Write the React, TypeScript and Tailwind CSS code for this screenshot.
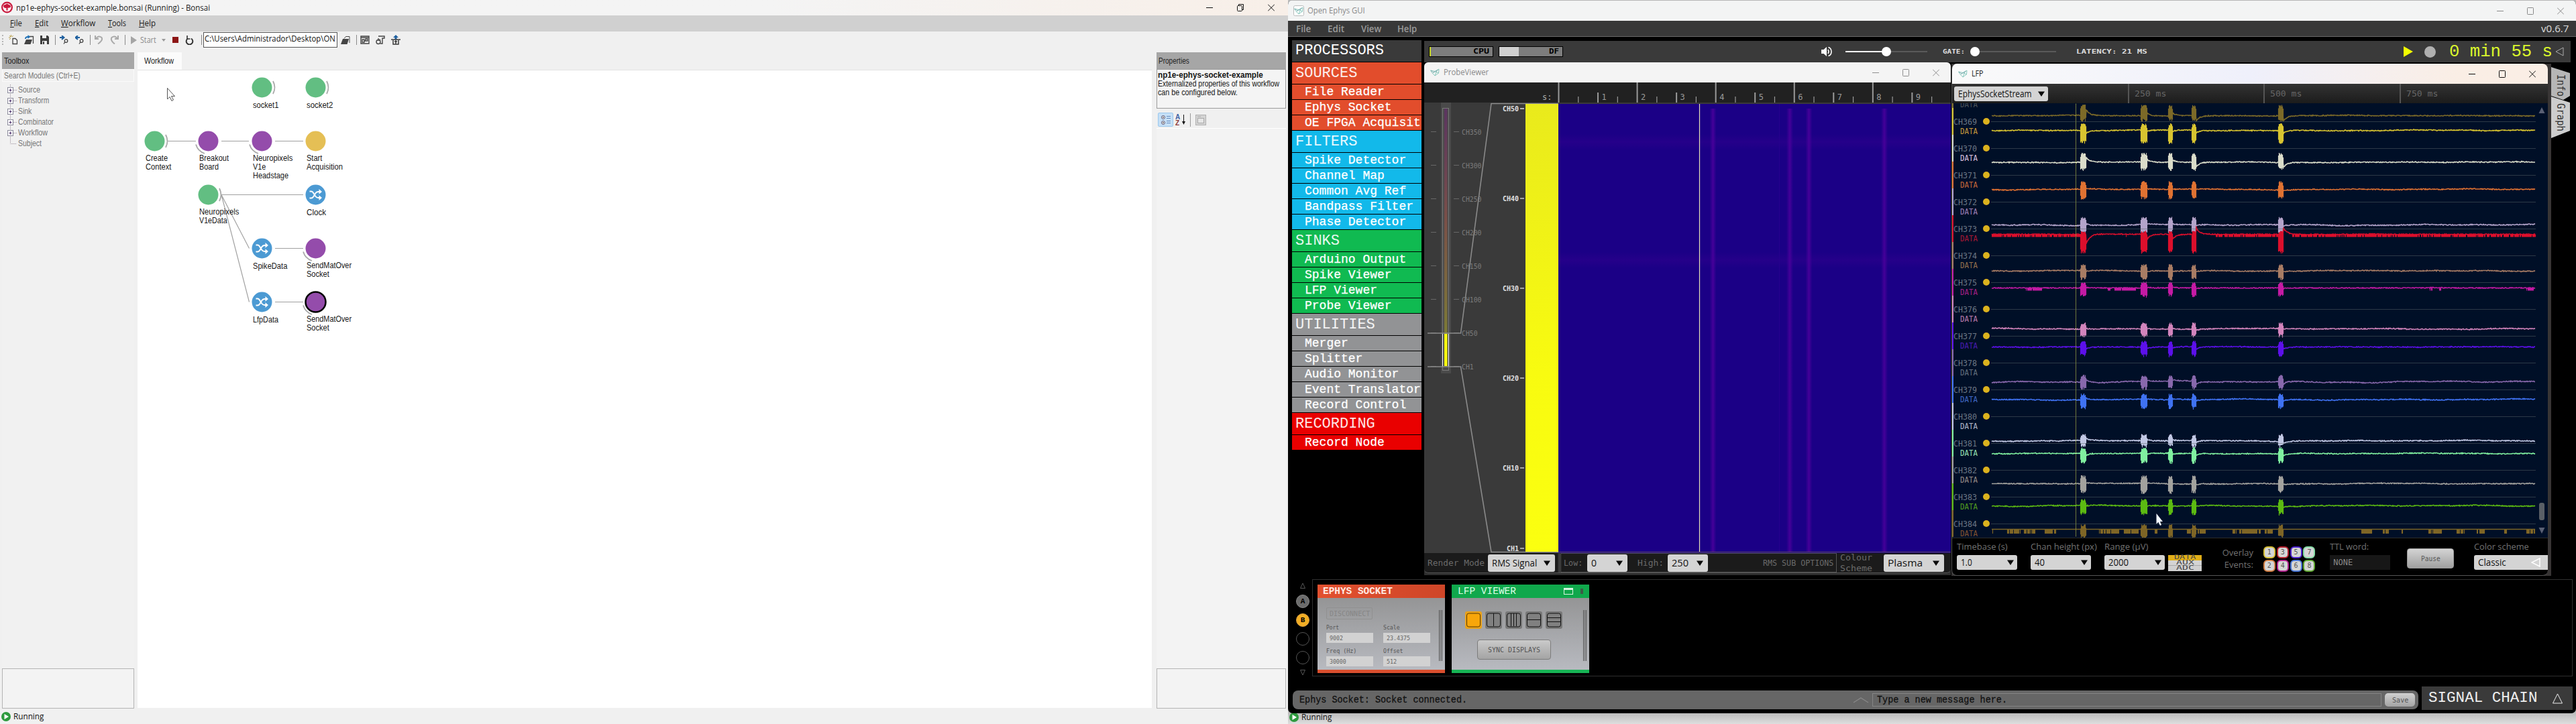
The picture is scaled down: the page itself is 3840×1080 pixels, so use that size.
import { useLayoutEffect, useRef, useState, type ReactNode } from "react";

/* Single line of text squeezed or stretched to a given width. */
function Fit({ w, className = "", children }: { w: number; className?: string; children: ReactNode }) {
  const ref = useRef<HTMLSpanElement>(null);
  const [scale, setScale] = useState(1);
  useLayoutEffect(() => {
    if (ref.current && ref.current.offsetWidth) setScale(w / ref.current.offsetWidth);
  }, [w]);
  return (
    <span className={"block shrink-0 leading-none " + className} style={{ width: w }}>
      <span ref={ref} className="inline-block origin-left whitespace-pre" style={{ transform: `scaleX(${scale})` }}>
        {children}
      </span>
    </span>
  );
}

const UI = "font-['Open_Sans','Noto_Sans',sans-serif]";
const ARIAL = "font-['Liberation_Sans',Arial,sans-serif]";
const MONO = "font-['Liberation_Mono',monospace]";
const CODE = "font-['DejaVu_Sans_Mono',monospace]";

function WinButtons({ color, className, restore }: { color: string; className: string; restore?: boolean }) {
  return (
    <div className={"flex items-center " + className}>
      <svg width="10" height="11" stroke={color} fill="none"><path d="M0 5.5H10" /></svg>
      <svg width="10" height="11" stroke={color} fill="none">
        {restore ? <><rect x=".5" y="2.5" width="7" height="8" rx="1" /><path d="M2.5 2V.5H9.5V8.5H8" /></> : <rect x=".5" y=".5" width="9" height="10" rx=".8" />}
      </svg>
      <svg width="10" height="11" stroke={color} fill="none"><path d="M0 .5L10 10.5M10 .5L0 10.5" /></svg>
    </div>
  );
}

function EphysLogo({ framed }: { framed?: boolean }) {
  return (
    <svg width="16" height="16" viewBox="0 0 16 16" fill="none">
      {framed && <rect x=".5" y=".5" width="15" height="15" rx="2" fill="#fff" stroke="#b9bcbc" />}
      <path d="M1.500 5L8 6.500L14 3L13.500 9L8 13L4.500 9.500L1.500 5ZM4.500 9.500L8 6.500L13.500 9M8 13L11 5" stroke="#7fc4b8" strokeWidth=".9" />
      <path d="M2 5L6 8L13 4" stroke="#6f9aa5" strokeWidth=".7" />
    </svg>
  );
}

function Caret({ className = "" }: { className?: string }) {
  return <svg width="10" height="8" className={"shrink-0 " + className}><path d="M0 .5H10L5 8Z" fill="#0a0a0a" /></svg>;
}

function Combo({ text, w, className }: { text: string; w: number; className: string }) {
  return (
    <div className={"flex shrink-0 items-center justify-between rounded-[3px] bg-[#d4d4d4] text-[#111] " + className}>
      <Fit w={w} className={UI + " text-[14px]"}>{text}</Fit>
      <Caret />
    </div>
  );
}

/* ---------------------------------------------------------------- Bonsai */

const Sep = () => <div className="h-[15px] w-px bg-[#8a8a8a]" />;

const toolbarItems: { w: string; el: ReactNode }[] = [
  { w: "w-[8px]", el: <div className="h-[15px] border-l-2 border-dotted border-[#b5b5b5]" /> },
  { w: "w-[24px]", el: <svg width="14" height="15" fill="none"><path d="M6 5.500H10L12.500 8V13.500H6Z" stroke="#444" strokeWidth="1.300" /><path d="M3.500 0V3M0 4H2.500M1 1L3 3M6.500 1L5 3M1 7L3 5" stroke="#b59a3e" /></svg> },
  { w: "w-[22px]", el: <svg width="15" height="15"><path d="M6 2.500H13.500V13" fill="none" stroke="#444" strokeWidth="1.300" /><path d="M0 14L3 7H12L9.500 14Z" fill="#444" /><path d="M2 6Q2 2.500 6.500 3" stroke="#1d6fb5" strokeWidth="2" fill="none" /><path d="M5.500 0L9 3L5.500 6Z" fill="#1d6fb5" /></svg> },
  { w: "w-[24px]", el: <svg width="13" height="13"><path d="M0 0H11L13 2V13H0Z" fill="#3d3d3d" /><path d="M3 0H9V4H3ZM3 8H10V13H3Z" fill="#eee" /><path d="M4 9H6V13H4Z" fill="#3d3d3d" /></svg> },
  { w: "w-[8px]", el: <Sep /> },
  { w: "w-[19px]", el: <svg width="13" height="13" fill="none"><path d="M0 3H5M3 0L6.500 3L3 6" stroke="#1d5f9f" strokeWidth="2" /><circle cx="9.500" cy="8" r="2.300" stroke="#444" strokeWidth="1.300" /><path d="M6 12.500L8 9.500" stroke="#444" strokeWidth="1.300" /></svg> },
  { w: "w-[27px]", el: <svg width="13" height="13" fill="none"><path d="M7 3H2M4 0L.500 3L4 6" stroke="#1d5f9f" strokeWidth="2" /><circle cx="9.500" cy="8" r="2.300" stroke="#444" strokeWidth="1.300" /><path d="M6 12.500L8 9.500" stroke="#444" strokeWidth="1.300" /></svg> },
  { w: "w-[4px]", el: <Sep /> },
  { w: "w-[22px]", el: <svg width="13" height="13" fill="none" stroke="#aaa" strokeWidth="2"><path d="M1 0V5H6M1.500 5Q6 -1 10.500 3Q13 7 5 12.500" /></svg> },
  { w: "w-[24px]", el: <svg width="13" height="13" fill="none" stroke="#aaa" strokeWidth="2"><path d="M12 0V5H7M11.500 5Q7 -1 2.500 3Q0 7 7 12.500" /></svg> },
  { w: "w-[8px]", el: <Sep /> },
  { w: "w-[19px]", el: <svg width="9" height="12"><path d="M0 0L9 6L0 12Z" fill="#a5a5a5" /></svg> },
  { w: "w-[24px]", el: <Fit w={24} className={UI + " text-[12px] text-[#8b8b8b]"}>Start</Fit> },
  { w: "w-[22px]", el: <svg width="6" height="4"><path d="M0 0H6L3 4Z" fill="#999" /></svg> },
  { w: "w-[12px]", el: <div className="size-[9px] bg-[#8c1515]" /> },
  { w: "w-[31px]", el: <svg width="13" height="14" fill="none" stroke="#333" strokeWidth="2"><path d="M4 4.500A4.800 4.800 0 1 0 9 4.500" /><path d="M3 0V5H7.500" strokeWidth="1.600" /></svg> },
  { w: "w-[5px]", el: <Sep /> },
];

const toolbarRight: { w: string; el: ReactNode }[] = [
  { w: "w-[24px]", el: <svg width="14" height="13"><path d="M5 4.500L7.500 1.500H13V11" fill="none" stroke="#444" /><path d="M0 13L3 5H12L9.500 13Z" fill="#444" /></svg> },
  { w: "w-[8px]", el: <Sep /> },
  { w: "w-[18px]", el: <svg width="14" height="13" fill="none" stroke="#444" strokeWidth="1.400"><path d="M1 1H13V12H1ZM1 3H13M3 6H6V10H3ZM8 5H11V8H8ZM6 8H8" /></svg> },
  { w: "w-[28px]", el: <svg width="14" height="14" fill="none" stroke="#444" strokeWidth="1.400"><path d="M4 1H13V4H10V12H7" /><circle cx="4" cy="9.500" r="3" /><path d="M4 4V7L7 6" /></svg> },
  { w: "w-[18px]", el: <svg width="14" height="15"><path d="M7 0L11 4H8.500V7H5.500V4H3Z" fill="#1d5f9f" /><path d="M0 7H14M3 8V14H11V8M5 10H9M7 8V14" stroke="#3a3a3a" strokeWidth="1.500" fill="none" /></svg> },
];

const tree = [["Source", 33], ["Transform", 46], ["Sink", 20], ["Combinator", 53], ["Workflow", 44], ["Subject", 35]] as const;

type NodeKind = "green" | "purple" | "yellow" | "blue" | "selected";
const nodes: { x: number; y: number; kind: NodeKind; lines: [string, number][] }[] = [
  { x: 390.500, y: 130.500, kind: "green", lines: [["socket1", 38]] },
  { x: 470.500, y: 130.500, kind: "green", lines: [["socket2", 39]] },
  { x: 230.500, y: 210.500, kind: "green", lines: [["Create", 33], ["Context", 38]] },
  { x: 310.500, y: 210.500, kind: "purple", lines: [["Breakout", 44], ["Board", 29]] },
  { x: 390.500, y: 210.500, kind: "purple", lines: [["Neuropixels", 59], ["V1e", 19], ["Headstage", 53]] },
  { x: 470.500, y: 210.500, kind: "yellow", lines: [["Start", 23], ["Acquisition", 54]] },
  { x: 310.500, y: 290.500, kind: "green", lines: [["Neuropixels", 59], ["V1eData", 42]] },
  { x: 470.500, y: 290.500, kind: "blue", lines: [["Clock", 29]] },
  { x: 390.500, y: 370.500, kind: "blue", lines: [["SpikeData", 51]] },
  { x: 470.500, y: 370.500, kind: "purple", lines: [["SendMatOver", 67], ["Socket", 34]] },
  { x: 390.500, y: 450.500, kind: "blue", lines: [["LfpData", 38]] },
  { x: 470.500, y: 450.500, kind: "selected", lines: [["SendMatOver", 67], ["Socket", 34]] },
];
const nodeFill: Record<NodeKind, string> = { green: "#62be82", purple: "#944cab", yellow: "#e5bf55", blue: "#4c9ad3", selected: "#944cab" };

function WorkflowCanvas() {
  return (
    <div className="relative h-[952px] w-[1512px] border-t border-[#e2e2e2] bg-white">
      <svg width="640" height="500" viewBox="205 105 640 500" fill="none">
        <path d="M249 210.500H292M330 210.500H371M410 210.500H452M330 290.500H452M330 290.500L371.500 370.500M330 290.500L371.500 450.500M410 370.500H452M410 450.500H452" stroke="#a0a0a0" strokeWidth="1.150" />
        {nodes.map((n, i) => (
          <g key={i} transform={`translate(${n.x} ${n.y})`}>
            <circle r="15" fill={nodeFill[n.kind]} stroke={n.kind === "selected" ? "#000" : "none"} strokeWidth="2.500" />
            {n.kind === "green" && <path d="M16.500 -9.500Q21.500 0 16.500 9.500" stroke="#a9a9a9" strokeWidth="1.800" />}
            {(n.kind === "purple" || n.kind === "selected") && <path d="M-18.500 5Q-15.500 15 -5.500 18.500" stroke="#a9a9a9" strokeWidth="1.800" />}
            {n.kind === "blue" && (
              <g stroke="#fff" strokeWidth="2">
                <path d="M-9 -5H-6.500Q-4.500 -5 -3 -2L0 2.500Q1.500 4.500 4 4.500H6M-9 5H-6.500Q-4.500 5 -3 2.500L0 -2.500Q1.500 -4.500 4 -4.500H6" />
                <path d="M5 -8.500L9.500 -4.500L5 -.800ZM5 .800L9.500 4.500L5 8.500Z" fill="#fff" stroke="none" />
              </g>
            )}
          </g>
        ))}
        <path d="M249.500 131.500V148L253 144.500L256 150.500L258.500 149L255.500 143.500H260.500Z" fill="#fff" stroke="#555" />
      </svg>
      {nodes.map((n, i) => (
        <div key={i} className={"absolute flex flex-col text-[12px] text-[#161616] " + ARIAL} style={{ left: n.x - 13.5 - 205, top: n.y + (n.lines.length === 1 ? 20.5 : 19.5) - 105 }}>
          {n.lines.map(([t, w]) => <Fit key={t} w={w} className="h-[13px]">{t}</Fit>)}
        </div>
      ))}
    </div>
  );
}

function Status({ className = "" }: { className?: string }) {
  return (
    <div className={"flex items-center " + className}>
      <svg width="14" height="14"><circle cx="7" cy="7" r="7" fill="#2e9a3e" /><path d="M4.500 3L11 7L4.500 11Z" fill="#fff" /></svg>
      <Fit w={45} className={UI + " ml-[4px] text-[12px] text-[#111]"}>Running</Fit>
    </div>
  );
}

function Bonsai() {
  return (
    <div className={"flex h-[1080px] w-[1920px] flex-col bg-[#f0f0f0] " + UI}>
      <div className="flex h-[23px] items-center bg-linear-to-r from-[#f4f4f4] from-60% to-[#f8efe8]">
        <svg width="17" height="18" className="ml-[2px] mt-[-1px]"><circle cx="8.500" cy="9" r="8.500" fill="#c8183c" /><circle cx="8.500" cy="9" r="6.300" fill="#fbeef1" /><path d="M3 7.500Q3 4.500 6 5Q8.500 2 11 5Q14 5 14 8.500Q11 10.500 9.500 9.500V13.500H7.500V10Q4 10.500 3 7.500Z" fill="#c8183c" /></svg>
        <Fit w={289} className="ml-[5px] text-[13px] text-[#222]">np1e-ephys-socket-example.bonsai (Running) - Bonsai</Fit>
        <WinButtons color="#111" restore className="ml-auto mr-[20px] gap-[36px]" />
      </div>
      <div className="flex h-[24px] items-center bg-[#d0d0d0] pl-[15px] text-[12.5px] text-[#1c1c1c]">
        <Fit w={18}><u>F</u>ile</Fit>
        <Fit w={20} className="ml-[19px]"><u>E</u>dit</Fit>
        <Fit w={51} className="ml-[19px]"><u>W</u>orkflow</Fit>
        <Fit w={27} className="ml-[19px]"><u>T</u>ools</Fit>
        <Fit w={25} className="ml-[19px]"><u>H</u>elp</Fit>
      </div>
      <div className="flex h-[25px] items-center">
        {toolbarItems.map((t, i) => <div key={i} className={"flex shrink-0 justify-center " + t.w}>{t.el}</div>)}
        <div className="mb-[1px] flex h-[23px] w-[200px] items-center overflow-hidden border border-[#555] bg-white pl-[1px]">
          <Fit w={195} className="mt-[-2px] text-[12.500px] text-[#111]">C:\Users\Administrador\Desktop\ON</Fit>
        </div>
        {toolbarRight.map((t, i) => <div key={i} className={"flex shrink-0 justify-center " + t.w}>{t.el}</div>)}
      </div>
      <div className="flex h-[985px] pt-[6px]">
        <div className="ml-[3px] flex w-[197px] flex-col">
          <div className="flex h-[25px] items-center bg-[#a6a6a6] pl-[3px]"><Fit w={37} className={ARIAL + " text-[12px] text-[#222]"}>Toolbox</Fit></div>
          <div className="flex h-[19px] items-center border border-[#fafafa] bg-[#f1f1f1] pl-[2px]"><Fit w={114} className={ARIAL + " text-[12px] text-[#777]"}>Search Modules (Ctrl+E)</Fit></div>
          <div className="flex h-[875px] flex-col bg-[#f1f1f1] pt-[4px]">
            {tree.map(([t, w], i) => (
              <div key={t} className="flex h-[16px] items-center pl-[8px]">
                <svg width="14" height="16" fill="none">
                  <path d={i === 5 ? "M4.500 0V8.500H14" : "M4.500 0V16M9 8.500H14"} stroke="#9a8d9a" strokeDasharray="1 1" />
                  {i < 5 && <><rect x=".5" y="4.500" width="8" height="8" fill="#fff" stroke="#8c8c9c" /><path d="M2.500 8.500H6.500M4.500 6.500V10.500" stroke="#4a2f6a" /></>}
                </svg>
                <Fit w={w} className={ARIAL + " ml-[2px] text-[12px] text-[#777]"}>{t}</Fit>
              </div>
            ))}
          </div>
          <div className="h-[60px] border border-[#b4b4b4] bg-[#f3f3f3]" />
        </div>
        <div className="ml-[5px] flex w-[1512px] flex-col">
          <div className="flex h-[26px] w-[66px] items-center bg-[#fbfbfb] pl-[10px]"><Fit w={44} className={ARIAL + " text-[12px] text-[#222]"}>Workflow</Fit></div>
          <WorkflowCanvas />
        </div>
        <div className="ml-[7px] flex w-[193px] flex-col">
          <div className="flex h-[25px] items-center bg-[#a6a6a6] pl-[3px]"><Fit w={46} className={ARIAL + " text-[12px] text-[#222]"}>Properties</Fit></div>
          <div className={"flex h-[59px] flex-col border border-[#9c9c9c] bg-[#f4f4f4] pl-[1px] pt-[2px] text-[12px] text-[#161616] " + ARIAL}>
            <Fit w={157} className="h-[13px] font-bold">np1e-ephys-socket-example</Fit>
            <Fit w={181} className="h-[13px]">Externalized properties of this workflow</Fit>
            <Fit w={119} className="h-[13px]">can be configured below.</Fit>
          </div>
          <div className="mt-[6px] flex h-[24px] items-start border-b border-white pl-[2px]">
            <div className="flex h-[21px] w-[23px] items-center justify-center rounded-[2px] border border-[#9ac8ee] bg-[#c6e0f6]">
              <svg width="16" height="16" fill="none"><circle cx="4" cy="4" r="2.500" fill="#fff" stroke="#557" /><circle cx="4" cy="12" r="2.500" fill="#fff" stroke="#557" /><path d="M9 2.500H15M9 5.500H15M9 9.500H15M9 12.500H15" stroke="#678cc0" /><path d="M3 4H5M3 12H5" stroke="#000" /></svg>
            </div>
            <div className={"ml-[3px] flex items-center " + ARIAL}>
              <div className="flex flex-col text-[10px] font-bold leading-[9px]"><span className="mt-[2px] text-[#3b5fa5]">A</span><span className="text-[#8c3c3c]">Z</span></div>
              <svg width="7" height="16" className="ml-[2px] mt-[2px]"><path d="M3.500 0V13" stroke="#111" /><path d="M1 10H6L3.500 15Z" fill="#111" /></svg>
            </div>
            <div className="ml-[6px] mt-[1px] h-[20px] w-px bg-[#999]" />
            <svg width="16" height="16" className="ml-[7px] mt-[3px]" fill="none"><rect x=".5" y=".5" width="15" height="15" fill="#d4d4d4" stroke="#b0b0b0" /><rect x="3.500" y="5.500" width="9" height="7" fill="#e6e6e6" stroke="#aaa" /><path d="M3 3H8" stroke="#aaa" /></svg>
          </div>
          <div className="h-[805px] bg-[#f3f3f3]" />
          <div className="h-[60px] border border-[#b4b4b4] bg-[#f3f3f3]" />
        </div>
      </div>
      <Status className="h-[23px] pl-[2px]" />
    </div>
  );
}

/* ------------------------------------------------------------ Open Ephys */

const processors = [
  { title: "SOURCES", bg: "bg-[#e24d2c]", items: ["File Reader", "Ephys Socket", "OE FPGA Acquisit"] },
  { title: "FILTERS", bg: "bg-[#12b9ea]", items: ["Spike Detector", "Channel Map", "Common Avg Ref", "Bandpass Filter", "Phase Detector"] },
  { title: "SINKS", bg: "bg-[#10ba51]", items: ["Arduino Output", "Spike Viewer", "LFP Viewer", "Probe Viewer"] },
  { title: "UTILITIES", bg: "bg-[#929395]", items: ["Merger", "Splitter", "Audio Monitor", "Event Translator", "Record Control"] },
  { title: "RECORDING", bg: "bg-[#e90000]", items: ["Record Node"] },
];

function ProcessorList() {
  return (
    <div className={"flex w-[193px] flex-col gap-px overflow-hidden whitespace-pre text-white " + MONO}>
      <div className="h-[32px] bg-[#3a3a3a] pl-[5px] text-[22px] leading-[32px]">PROCESSORS</div>
      {processors.map((g) => (
        <div key={g.title} className="flex flex-col gap-px">
          <div className={"h-[32px] overflow-hidden pl-[5px] text-[22px] leading-[33px] text-white/90 " + g.bg}>{g.title}</div>
          {g.items.map((t) => (
            <div key={t} className={"h-[22px] overflow-hidden pl-[19px] text-[18px] leading-[22px] [-webkit-text-stroke:0.25px_white] " + g.bg}>{t}</div>
          ))}
        </div>
      ))}
    </div>
  );
}

function ControlBar() {
  return (
    <div className="flex h-[32px] w-[1709px] items-center bg-[#3a3a3a]">
      <div className="ml-[7px] flex h-[16px] w-[96px] items-center justify-end border border-black bg-[#7d7d7d] pr-[5px]">
        <div className="mr-auto h-full w-[2px] bg-[#c8d820]" />
        <Fit w={24} className={CODE + " text-[10px] font-bold text-black"}>CPU</Fit>
      </div>
      <div className="ml-[8px] flex h-[16px] w-[96px] items-center justify-end border border-black bg-[#7d7d7d] pr-[5px]">
        <div className="mr-auto h-full w-[29px] bg-[#d0d0d0]" />
        <Fit w={15} className={CODE + " text-[10px] font-bold text-black"}>DF</Fit>
      </div>
      <svg width="16" height="16" className="ml-[385px]" fill="none"><path d="M0 5H3.500L8 1V15L3.500 11H0Z" fill="#fff" /><path d="M10 5Q12 8 10 11M10.500 1.500Q15 3 15 8T10.500 14.500" stroke="#fff" strokeWidth="1.600" /></svg>
      <svg width="124" height="16" className="ml-[19px]"><path d="M1 8H62" stroke="#fff" strokeWidth="2" /><path d="M62 8H123" stroke="#666" strokeWidth="1.500" /><circle cx="62" cy="8" r="7" fill="#fff" /></svg>
      <Fit w={33} className={CODE + " ml-[22px] text-[9px] font-bold text-[#ddd]"}>GATE:</Fit>
      <svg width="130" height="16" className="ml-[8px]"><path d="M7 8H128" stroke="#666" strokeWidth="1.500" /><circle cx="7" cy="8" r="7" fill="#fff" /></svg>
      <Fit w={106} className={CODE + " ml-[28px] text-[9px] font-bold text-[#ddd]"}>LATENCY: 21 MS</Fit>
      <svg width="14" height="16" className="ml-[382px]"><path d="M0 0L14 8L0 16Z" fill="#f2ff00" /></svg>
      <div className="ml-[17px] size-[17px] rounded-full bg-[#b0b0b0]" />
      <Fit w={154} className={MONO + " ml-[20px] text-[26px] text-[#dcf82c]"}>0 min 55 s</Fit>
      <svg width="13" height="14" className="ml-[4px]" fill="none" stroke="#aaa"><path d="M12 1V13L1 7Z" /></svg>
    </div>
  );
}

const probeTicks = [["CH350", 196.5], ["CH300", 246.5], ["CH250", 296.500], ["CH200", 346.5], ["CH150", 396.5], ["CH100", 446.5], ["CH50", 496.5], ["CH1", 546.5]] as const;
const zoomTicks = [["CH50", 162], ["CH40", 296], ["CH30", 430], ["CH20", 564], ["CH10", 698], ["CH1", 818]] as const;

function ProbeOverview() {
  return (
    <svg width="200" height="672" viewBox="2123 153 200 672" className="shrink-0 bg-[#3a3a3a]">
      <defs>
        <linearGradient id="probe" x1="0" y1="0" x2="0" y2="1"><stop offset="0" stopColor="#5b3560" /><stop offset=".5" stopColor="#7a5048" /><stop offset="1" stopColor="#7c7a36" /></linearGradient>
        <linearGradient id="yel" x1="0" y1="0" x2="0" y2="1"><stop offset="0" stopColor="#e9ea1c" /><stop offset=".6" stopColor="#f8fb10" /><stop offset="1" stopColor="#fbff10" /></linearGradient>
      </defs>
      <rect x="2148" y="153" width="15" height="404" fill="#4a4a4a" />
      <rect x="2150.500" y="161.500" width="9" height="391" fill="#4a4a4a" stroke="#787878" />
      <rect x="2153" y="162" width="4.500" height="336" fill="url(#probe)" />
      <path d="M2150.500 498V547M2159.500 498V547" stroke="#fff" />
      <rect x="2153" y="498" width="4.500" height="48" fill="#fbff10" />
      {probeTicks.map(([t, y]) => (
        <g key={t}>
          <path d={`M2133 ${y}H2141M2167 ${y}H2175`} stroke="#686868" />
          <text x="2179" y={y + 4} textLength={t.length * 5.9} lengthAdjust="spacingAndGlyphs" fill="#7c7c7c" className={CODE + " text-[11px]"}>{t}</text>
        </g>
      ))}
      <path d="M2128 497H2177.500L2223 154.500H2323M2128 547H2177.500L2223 823.500H2323" fill="none" stroke="#8a8a8a" strokeWidth="1.600" />
      {zoomTicks.map(([t, y]) => (
        <g key={t}>
          <path d={`M2266 ${y}H2272`} stroke="#e0e0e0" strokeWidth="1.300" />
          <text x={2264 - t.length * 6} y={y + 4} textLength={t.length * 6} lengthAdjust="spacingAndGlyphs" fill="#e0e0e0" className={CODE + " text-[10.500px] font-bold"}>{t}</text>
        </g>
      ))}
      <rect x="2274" y="155" width="49" height="668" fill="url(#yel)" />
    </svg>
  );
}

function ProbeRuler() {
  return (
    <svg width="785" height="30" viewBox="2123 0 785 30" className="bg-[#212121]">
      <text x="2299" y="26" fill="#aaa" className={CODE + " text-[12px]"}>s:</text>
      {Array.from({ length: 20 }, (_, i) => {
        const x = 2323.5 + i * 29.27;
        const top = i % 4 === 0 ? 0 : i % 2 === 0 ? 15 : 21;
        return <path key={i} d={`M${x} ${top}V30`} stroke="#9a9a9a" strokeWidth={i % 2 ? 1.2 : 2} />;
      })}
      {Array.from({ length: 9 }, (_, i) => <text key={i} x={2329 + (i + 1) * 58.54} y="26" fill="#9a9a9a" className={CODE + " text-[12px]"}>{i + 1}</text>)}
    </svg>
  );
}

function Heatmap() {
  return (
    <svg width="585" height="670" viewBox="2323 155 585 670" className="bg-[#1b0086]">
      <defs>
        <linearGradient id="streak"><stop offset="0" stopColor="#4c009c" stopOpacity="0" /><stop offset=".5" stopColor="#4c009c" stopOpacity=".85" /><stop offset="1" stopColor="#4c009c" stopOpacity="0" /></linearGradient>
        <linearGradient id="band" x1="0" y1="0" x2="0" y2="1"><stop offset="0" stopColor="#2c008c" stopOpacity="0" /><stop offset=".5" stopColor="#2c008c" stopOpacity=".6" /><stop offset="1" stopColor="#2c008c" stopOpacity="0" /></linearGradient>
      </defs>
      <rect x="2323" y="200" width="585" height="24" fill="url(#band)" />
      <rect x="2323" y="376" width="585" height="24" fill="url(#band)" />
      <rect x="2652" y="155" width="1" height="668" fill="#26008e" />
      {[2548.5, 2663, 2691.5, 2804].map((x) => <rect key={x} x={x} y="162" width="10" height="661" fill="url(#streak)" />)}
      <path d="M2533.500 155V823" stroke="#e6e2b8" strokeWidth="1.200" />
      <path d="M2323 823.500H2908" stroke="#5a4a66" />
    </svg>
  );
}

function ProbeViewer() {
  return (
    <div className="absolute left-[203px] top-[93px] flex h-[765px] w-[785px] flex-col overflow-hidden rounded-tl-[6px] rounded-tr-[6px] bg-[#2e2e2e]">
      <div className="flex h-[30px] items-center bg-[#f4f4f4] pl-[8px]">
        <EphysLogo />
        <Fit w={67} className={UI + " ml-[5px] text-[12.500px] text-[#8a8a8a]"}>ProbeViewer</Fit>
        <WinButtons color="#8f8f8f" className="ml-auto mr-[17px] gap-[35px]" />
      </div>
      <ProbeRuler />
      <div className="flex h-[672px] bg-[#3a3a3a]"><ProbeOverview /><div className="pt-[2px]"><Heatmap /></div></div>
      <div className={"flex h-[30px] items-center rounded-b-[6px] border-b border-[#555] bg-[#1b1b1b] pl-[5px] text-[13px] text-[#6a6a6a] " + CODE}>
        <Fit w={85}>Render Mode</Fit>
        <Combo text="RMS Signal" w={67} className="ml-[5px] h-[26px] w-[100px] pl-[6px] pr-[7px]" />
        <div className="ml-[4px] h-[29px] w-[3px] border-r border-[#555] bg-[#2c2c2c]" />
        <div className="ml-[1px] flex h-[29px] w-[412px] items-center border border-[#555] pl-[4px]">
          <Fit w={28}>Low:</Fit>
          <Combo text="0" w={8} className="ml-[7px] h-[26px] w-[60px] pl-[6px] pr-[7px]" />
          <Fit w={39} className="ml-[15px]">High:</Fit>
          <Combo text="250" w={25} className="ml-[6px] h-[26px] w-[60px] pl-[6px] pr-[7px]" />
          <Fit w={105} className="ml-[82px]">RMS SUB OPTIONS</Fit>
        </div>
        <div className="ml-[5px] flex flex-col gap-[3px]"><Fit w={48}>Colour</Fit><Fit w={48}>Scheme</Fit></div>
        <Combo text="Plasma" w={52} className="ml-[17px] h-[26px] w-[90px] pl-[6px] pr-[7px]" />
      </div>
    </div>
  );
}

/* channel, trace y, trace colour, label colour, burst top, burst bottom, wobble, tail after burst, extra texture */
type Channel = { id: number; y: number; c: string; label: string; t: number; b: number; wob: number; tail: number; tex?: "red" | "pink" | "gold" };
const channels: Channel[] = [
  { id: 368, y: 172.5, c: "#7c6a28", label: "#4c5258", t: 156, b: 182, wob: 0.6, tail: 8 },
  { id: 369, y: 194.5, c: "#d8c430", label: "#c89a3c", t: 184, b: 215, wob: 0.8, tail: -4 },
  { id: 370, y: 242, c: "#dadcca", label: "#dcc4e0", t: 228, b: 255, wob: 0.7, tail: 7 },
  { id: 371, y: 282.5, c: "#e07232", label: "#c8683a", t: 270, b: 298, wob: 0.8, tail: 1 },
  { id: 372, y: 335.5, c: "#b4a4ca", label: "#a080b8", t: 323, b: 350, wob: 1.1, tail: 2 },
  { id: 373, y: 349.5, c: "#dc0f2c", label: "#a81834", t: 344, b: 379, wob: 0.3, tail: -14, tex: "red" },
  { id: 374, y: 404, c: "#a87c64", label: "#94704e", t: 394, b: 419, wob: 0.7, tail: -1 },
  { id: 375, y: 429.5, c: "#c41aa4", label: "#a82088", t: 420, b: 444, wob: 0.2, tail: 1, tex: "pink" },
  { id: 376, y: 490.5, c: "#d284bc", label: "#bc7cae", t: 481, b: 504, wob: 0.8, tail: 1 },
  { id: 377, y: 517.5, c: "#5c10ea", label: "#4a1cb0", t: 508, b: 533, wob: 0.4, tail: -3 },
  { id: 378, y: 569.5, c: "#8868ac", label: "#64707e", t: 559, b: 582, wob: 1.5, tail: 4 },
  { id: 379, y: 596, c: "#3f72f2", label: "#4068c4", t: 587, b: 611, wob: 0.9, tail: 2 },
  { id: 380, y: 657.5, c: "#c2c8e4", label: "#b0b8ca", t: 647, b: 668, wob: 0.8, tail: 3 },
  { id: 381, y: 676.5, c: "#80f0a0", label: "#98e2b4", t: 667, b: 692, wob: 0.6, tail: -3 },
  { id: 382, y: 721.5, c: "#a3a29e", label: "#988c88", t: 709, b: 737, wob: 0.8, tail: 1 },
  { id: 383, y: 754.500, c: "#5cba12", label: "#529c20", t: 744, b: 769, wob: 1, tail: -1 },
  { id: 384, y: 789.5, c: "#7e6526", label: "#845230", t: 782, b: 804, wob: 0, tail: 0, tex: "gold" },
];
const bursts = [[3101, 3110], [3191, 3201], [3232, 3239], [3267, 3274], [3396, 3404]];

/* x ranges where the clipped channels show dense activity */
const dense: Record<"red" | "pink" | "gold", number[][]> = {
  red: [[2969, 3106], [3169, 3173], [3303, 3396], [3417, 3780]],
  pink: [[3020, 3044], [3141, 3146], [3152, 3184], [3622, 3626], [3636, 3639], [3766, 3777]],
  gold: [[2970, 2972], [2992, 3012], [3017, 3034], [3048, 3065], [3129, 3159], [3166, 3189], [3211, 3216], [3260, 3266], [3276, 3288], [3328, 3371], [3376, 3388], [3519, 3536], [3550, 3562], [3580, 3582], [3619, 3642], [3662, 3676], [3692, 3704], [3733, 3737], [3766, 3779]],
};

function rng(seed: number) {
  let s = seed * 7919 + 17;
  return () => {
    s = (s * 1103515245 + 12345) & 0x7fffffff;
    return ((s >> 8) & 0xffff) / 0x10000;
  };
}

function buildTrace(ch: Channel) {
  const r = rng(ch.id);
  const p1 = r() * 6, p2 = r() * 6, p3 = r() * 6;
  let line = "", burst = "", tex = "";
  for (let x = 2969; x <= 3779; x++) {
    const slow = (Math.sin(x / 31 + p1) + Math.sin(x / 13 + p2) * 0.7 + Math.sin(x / 71 + p3)) * ch.wob * 0.42;
    let tail = 0;
    bursts.forEach(([, e], i) => {
      const d = x - e;
      if (d >= 0 && d < 22) {
        const sign = i > 2 && ch.tail > 0 ? -1 : i > 2 && ch.tail < -10 ? -0.7 : 1;
        tail -= ch.tail * sign * (i === 1 || i === 2 ? 0.5 : 1) * Math.exp(-d / 5);
      }
    });
    const y = Math.round((ch.y + slow + tail + (r() - 0.5) * 1.3 * (ch.wob ? 1 : 0)) * 2) / 2;
    line += (line ? "L" : "M") + x + " " + y;
    if (ch.tex && dense[ch.tex].some(([a, b]) => x >= a && x < b) && r() < 0.86) {
      tex += ch.tex === "gold" ? `M${x + 0.5} 789V796` : `M${x + 0.5} ${ch.y}V${ch.y + 4}`;
    }
  }
  bursts.forEach(([s, e]) => {
    for (let x = s; x < e; x++) {
      const edge = x === s || x === e - 1 ? 4 : 0;
      burst += `M${x + 0.5} ${(ch.t + r() * 3 + edge).toFixed(1)}V${(ch.b - r() * 5 - edge * 0.5).toFixed(1)}`;
    }
  });
  return { line, burst, tex };
}

const traces = channels.map((c) => ({ ...c, ...buildTrace(c) }));

function LfpPlot() {
  return (
    <svg width="886" height="648" viewBox="2954 154 886 648" className="shrink-0" fill="none">
      {channels.slice(1).map((c, i) => <circle key={c.id} cx="2961" cy={181 + i * 40} r="5" fill="#dcb21e" />)}
      {traces.map((t) => (
        <g key={t.id} stroke={t.c}>
          <path d={t.line} strokeWidth="1.700" />
          <path d={t.burst} strokeWidth="1.200" />
          {t.tex && <path d={t.tex} strokeWidth="1.100" />}
        </g>
      ))}
      {channels.slice(1).map((c, i) => <path key={c.id} d={`M2968 ${181.500 + i * 40}H3780`} stroke="#5a6468" strokeOpacity=".5" />)}
      <path d="M3094.500 155V801" stroke="#dede50" strokeDasharray="1 1" />
      <path d="M3784.500 169L3789 160L3793.500 169Z" fill="#5a6074" />
      <rect x="3785" y="750" width="8" height="26" rx="3" fill="#5a5f66" />
      <path d="M3784.500 787H3793.500L3789 796Z" fill="#5a6074" />
      <path d="M3214.500 766V781.500L3217.500 779L3220 784L3222 783L3220 778H3224Z" fill="#f2f8ff" />
    </svg>
  );
}

const timeMarks = [["250 ms", "ml-[119px]"], ["500 ms", "ml-[145px]"], ["750 ms", "ml-[146px]"]] as const;

const eventButtons = [["1", "border-[#d6be34]"], ["3", "border-[#b4202e]"], ["5", "border-[#4a20cc]"], ["7", "border-[#86dca6]"], ["2", "border-[#d27e42]"], ["4", "border-[#b42490]"], ["6", "border-[#4a78d6]"], ["8", "border-[#62aa34]"]];

function Labeled({ label, lw, className, children }: { label: string; lw: number; className: string; children: ReactNode }) {
  return (
    <div className={"flex shrink-0 flex-col " + className}>
      <Fit w={lw} className={UI + " mb-[5px] h-[14px] text-[13px] text-[#727272]"}>{label}</Fit>
      {children}
    </div>
  );
}

function LfpWindow() {
  return (
    <div className="absolute left-[989px] top-[95px] flex h-[764px] w-[894px] bg-[#383535] pr-[5px]">
      <div className="flex h-[764px] w-[889px] flex-col overflow-hidden rounded-[8px] border-b border-l border-[#555] bg-black">
        <div className="flex h-[30px] items-center bg-linear-to-r from-[#fafafa] via-[#eff0fb] via-50% to-[#faeee5] to-85% pl-[8px]">
          <EphysLogo />
          <Fit w={18} className={UI + " ml-[5px] text-[12.500px] text-[#222]"}>LFP</Fit>
          <WinButtons color="#111" className="ml-auto mr-[18px] gap-[35px]" />
        </div>
        <div className={"flex h-[29px] items-center bg-linear-to-b from-[#333] to-[#1c1c1c] pl-[3px] text-[12px] text-[#666] " + CODE}>
          <Combo text="EphysSocketStream" w={110} className="h-[22px] w-[140px] pl-[6px] pr-[5px]" />
          {timeMarks.map(([t, cls]) => (
            <div key={t} className={"flex h-full shrink-0 items-center border-l-2 border-[#555] pl-[8px] " + cls}><Fit w={47}>{t}</Fit></div>
          ))}
        </div>
        <div className="flex h-[648px] overflow-hidden bg-[#000f27]">
          <div className="mt-[-33px] flex w-[44px] shrink-0 flex-col">
            {channels.map((c, i) => (
              <div key={c.id} className={"flex h-[40px] shrink-0 flex-col border-l-2 pt-[15px] text-[12px] " + CODE} style={{ borderColor: c.c }}>
                <div className="h-[14px]">{i > 0 && <Fit w={35} className="text-[#6c7684]">{"CH" + c.id}</Fit>}</div>
                <Fit w={26} className="ml-[10px] h-[11px]"><span style={{ color: c.label }}>DATA</span></Fit>
              </div>
            ))}
          </div>
          <LfpPlot />
        </div>
        <div className="flex h-[56px] border-t border-[#2c2c2c] pl-[7px] pt-[6px]">
          <Labeled label="Timebase (s)" lw={76} className="w-[110px]"><Combo text="1.0" w={17} className="h-[22px] w-[90px] pl-[6px] pr-[5px]" /></Labeled>
          <Labeled label="Chan height (px)" lw={99} className="w-[110px]"><Combo text="40" w={15} className="h-[22px] w-[90px] pl-[6px] pr-[5px]" /></Labeled>
          <Labeled label="Range (µV)" lw={65} className="w-[90px]"><Combo text="2000" w={30} className="h-[22px] w-[90px] pl-[6px] pr-[5px]" /></Labeled>
          <div className={"ml-[5px] mt-[19px] flex h-[24px] w-[50px] flex-col text-[8px] text-[#444] " + CODE}>
            <div className="flex h-[8px] justify-center bg-[#e0ae18]"><Fit w={32}>DATA</Fit></div>
            <div className="flex h-[8px] justify-center border-b border-[#aaa] bg-[#d4d4d4]"><Fit w={26}>AUX</Fit></div>
            <div className="flex h-[8px] justify-center bg-[#d0d0d0]"><Fit w={26}>ADC</Fit></div>
          </div>
          <div className={"ml-[31px] mt-[9px] flex w-[46px] flex-col items-end gap-[5px] text-[13px] text-[#727272] " + UI}><Fit w={46}>Overlay</Fit><Fit w={43}>Events:</Fit></div>
          <div className="ml-[15px] mt-[6px] grid h-[38px] w-[78px] grid-cols-4 gap-[2px]">
            {eventButtons.map(([n, c]) => <div key={n} className={"flex size-[18px] items-center justify-center rounded-[6px] border-[2.5px] bg-[#d6d6d6] text-[10px] leading-none text-[#555] " + CODE + " " + c}>{n}</div>)}
          </div>
          <Labeled label="TTL word:" lw={58} className="ml-[22px] w-[90px]"><div className="flex h-[22px] items-center bg-[#171717] pl-[5px]"><Fit w={29} className={CODE + " text-[12px] text-[#8a8a8a]"}>NONE</Fit></div></Labeled>
          <div className="ml-[25px] mt-[9px] flex h-[30px] w-[70px] items-center justify-center rounded-[4px] border border-[#999] bg-linear-to-b from-[#d4d4d4] to-[#a0a0a0]"><Fit w={29} className={CODE + " text-[10.500px] text-[#555]"}>Pause</Fit></div>
          <Labeled label="Color scheme" lw={82} className="ml-[30px] w-[110px]">
            <div className="flex h-[22px] items-center justify-between rounded-l-[3px] bg-[#d4d4d4] pl-[6px] pr-[11px]">
              <Fit w={42} className={UI + " text-[14px] text-[#111]"}>Classic</Fit>
              <svg width="14" height="14" fill="none" stroke="#fff" strokeWidth="1.500"><path d="M13 1V13L1 7Z" /></svg>
            </div>
          </Labeled>
        </div>
      </div>
    </div>
  );
}

function SideTabs() {
  return (
    <svg width="28" height="108" viewBox="3803 99 28 108" className="absolute left-[1883px] top-[99px]">
      <path d="M3803 100L3831 109V143L3821 149L3803 143Z" fill="#b6b6b6" />
      <path d="M3803 144L3831 153V195L3803 206Z" fill="#cdcdcd" />
      <g fill="#333" className={CODE + " text-[15px]"}>
        <text transform="translate(3812 111) rotate(90)" textLength="33" lengthAdjust="spacingAndGlyphs">Info</text>
        <text transform="translate(3812 154) rotate(90)" textLength="42" lengthAdjust="spacingAndGlyphs">Graph</text>
      </g>
    </svg>
  );
}

const Bars = () => <div className="flex h-[76px] gap-[1px]"><i className="w-px bg-[#555]" /><i className="w-px bg-[#666]" /><i className="w-px bg-[#555]" /></div>;

function Field({ label, lw, value, vw }: { label: string; lw: number; value: string; vw: number }) {
  return (
    <div className={"flex w-[70px] flex-col " + CODE}>
      <Fit w={lw} className="h-[13px] text-[9.500px] text-[#555]">{label}</Fit>
      <div className="flex h-[15px] items-center bg-[#d2d2d2] pl-[5px]"><Fit w={vw} className="text-[9.500px] text-[#666]">{value}</Fit></div>
    </div>
  );
}

function SignalChain() {
  return (
    <div className="flex h-[145px]">
      <div className={"flex w-[30px] flex-col items-center pl-[2px] text-[11px] font-bold text-black " + MONO}>
        <svg width="8" height="9" className="mt-[5px]" fill="none" stroke="#555"><path d="M4 1L7.500 8.500H.500Z" /></svg>
        <div className="mt-[9px] flex size-[20px] items-center justify-center rounded-full border border-[#888] bg-[#6c6c6c]">A</div>
        <div className="mt-[8px] flex size-[20px] items-center justify-center rounded-full border border-[#d8a040] bg-[#f2ad24]">B</div>
        <div className="mt-[8px] size-[20px] rounded-full border border-[#555]" />
        <div className="mt-[8px] size-[20px] rounded-full border border-[#555]" />
        <svg width="8" height="9" className="mt-[8px]" fill="none" stroke="#555"><path d="M4 8L7.500 .500H.500Z" /></svg>
      </div>
      <div className="flex w-[1879px] gap-[10px] border border-[#2f2f2f] pl-[7px] pt-[7px]">
        <div className="flex h-[132px] w-[190px] flex-col border-b-[5px] border-[#d94f2e] bg-linear-to-b from-[#8e8e8e] to-[#b8bac0]">
          <div className="flex h-[20px] items-center bg-linear-to-r from-[#e2502f] to-[#cf4628] pl-[8px]"><Fit w={104} className={MONO + " text-[14px] font-bold text-[#ffe9e2]"}>EPHYS SOCKET</Fit></div>
          <div className="flex">
            <div className="flex w-[181px] flex-col pl-[13px] pt-[14px]">
              <div className="flex h-[18px] w-[69px] items-center justify-center rounded-[2px] border border-[#919191]"><Fit w={60} className={CODE + " text-[11px] text-[#868686]"}>DISCONNECT</Fit></div>
              <div className="mt-[7px] flex gap-[15px]"><Field label="Port" lw={19} value="9002" vw={20} /><Field label="Scale" lw={25} value="23.4375" vw={35} /></div>
              <div className="mt-[7px] flex gap-[15px]"><Field label="Freq (Hz)" lw={45} value="30000" vw={25} /><Field label="Offset" lw={29} value="512" vw={15} /></div>
            </div>
            <div className="pt-[18px]"><Bars /></div>
          </div>
        </div>
        <div className="flex h-[132px] w-[205px] flex-col border-b-[5px] border-[#17b455] bg-linear-to-b from-[#8e8e8e] to-[#b8bac0]">
          <div className="flex h-[20px] items-center bg-[#10a84c] pl-[9px]">
            <Fit w={87} className={MONO + " text-[14px] text-[#dfffe8]"}>LFP VIEWER</Fit>
            <div className="ml-[71px] h-[10px] w-[14px] border border-t-[3px] border-[#d8f4e0]" />
            <div className="ml-[11px] h-[8px] w-[4px] bg-[#3c5a46]" />
          </div>
          <div className="flex">
            <div className="flex w-[196px] flex-col pl-[20px] pt-[20px]">
              <div className="flex gap-[5px]">
                {["", "M12.500 3V22", "M8.500 3V22M12.500 3V22M16.500 3V22", "M3 12.500H22", "M3 9.500H22M3 15.500H22"].map((d, i) => (
                  <svg key={i} width="25" height="26" fill="none"><rect width="25" height="26" rx="3" fill={i ? "#777" : "#eaa21a"} /><rect x="2.500" y="3" width="20" height="20" rx="3" fill={i ? "#808080" : "#f8a60a"} stroke={i ? "#111" : "#5a3a00"} /><path d={d} stroke="#111" /></svg>
                ))}
              </div>
              <div className="ml-[18px] mt-[16px] flex h-[30px] w-[110px] items-center justify-center rounded-[4px] border border-[#7c7c7c] bg-linear-to-b from-[#cacaca] to-[#a4a4a4]"><Fit w={78} className={CODE + " text-[11px] text-[#555]"}>SYNC DISPLAYS</Fit></div>
            </div>
            <div className="pt-[18px]"><Bars /></div>
          </div>
        </div>
      </div>
    </div>
  );
}

function OpenEphys() {
  return (
    <div className="flex h-[1080px] w-[1920px] flex-col bg-linear-to-b from-[#bcbcbc] from-[1064px] to-[#dedede]">
      <div className="relative flex h-[1064px] flex-col overflow-hidden rounded-[7px] bg-black">
        <div className="flex h-[31px] items-center border-t border-[#b5b5b5] bg-[#f3f4f4] pl-[8px]">
          <EphysLogo framed />
          <Fit w={86} className={UI + " ml-[5px] text-[12.500px] text-[#8a8a8a]"}>Open Ephys GUI</Fit>
          <WinButtons color="#8a8a8a" className="ml-auto mr-[18px] gap-[35px]" />
        </div>
        <div className={"flex h-[24px] items-center border-b border-[#686868] bg-[#383838] pl-[12px] text-[14px] font-semibold text-[#9a9a9a] " + UI}>
          <Fit w={22}>File</Fit>
          <Fit w={25} className="ml-[25px]">Edit</Fit>
          <Fit w={30} className="ml-[25px]">View</Fit>
          <Fit w={29} className="ml-[24px]">Help</Fit>
          <Fit w={41} className="ml-auto mr-[11px] font-normal text-[#ddd]">v0.6.7</Fit>
        </div>
        <div className="mt-[5px] flex h-[804px] pl-[6px]">
          <ProcessorList />
          <div className="ml-[4px] mt-px"><ControlBar /></div>
        </div>
        <div className="pl-[6px]"><SignalChain /></div>
        <div className="mt-[15px] flex items-start pl-[7px]">
          <div className={"mt-[6px] flex h-[28px] w-[1678px] items-center rounded-[8px] bg-[#666] pl-[10px] text-[15px] text-[#111] " + MONO}>
            <Fit w={250} className="[-webkit-text-stroke:0.3px_#111]">Ephys Socket: Socket connected.</Fit>
            <svg width="24" height="9" className="ml-[575px]" fill="none" stroke="#888" strokeWidth="1.300"><path d="M1 8L12 1L23 8" /></svg>
            <div className="ml-[5px] flex h-[20px] w-[759px] items-center border border-[#858585] pl-[6px]"><Fit w={194} className="[-webkit-text-stroke:0.3px_#111]">Type a new message here.</Fit></div>
            <div className="ml-[5px] flex h-[20px] w-[45px] items-center justify-center rounded-[5px] bg-linear-to-b from-[#d0d0d0] to-[#a4a4a4]"><Fit w={24} className={CODE + " text-[10.500px] text-[#555]"}>Save</Fit></div>
          </div>
          <div className="ml-[5px] flex h-[35px] w-[225px] items-center bg-[#3a3a3a] pl-[10px]">
            <Fit w={162} className={MONO + " text-[22px] text-[#eee]"}>SIGNAL CHAIN</Fit>
            <svg width="17" height="16" className="ml-[22px]" fill="none" stroke="#eee"><path d="M8.500 1L15.500 15H1.500Z" /></svg>
          </div>
        </div>
        <ProbeViewer />
        <LfpWindow />
        <SideTabs />
      </div>
      <Status className="h-[12px] pl-[2px]" />
    </div>
  );
}

export default function App() {
  return (
    <div className="flex h-[1080px] w-[3840px] overflow-hidden bg-[#f0f0f0]">
      <Bonsai />
      <OpenEphys />
    </div>
  );
}
